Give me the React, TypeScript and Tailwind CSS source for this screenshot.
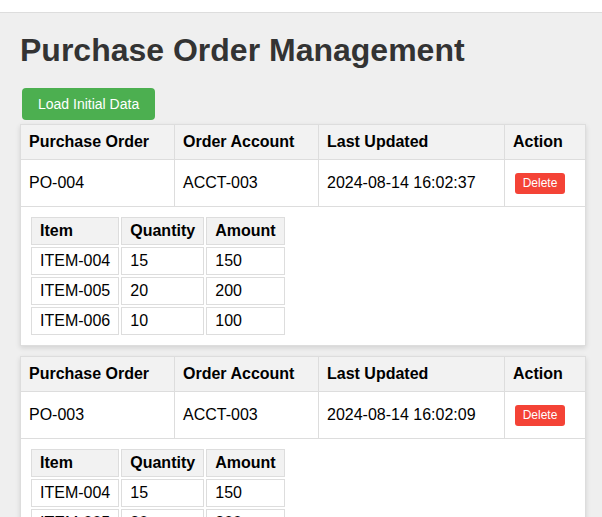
import React from 'react';

type Item = { item: string; qty: number; amount: number };
type Order = { po: string; account: string; updated: string; items: Item[] };

const orders: Order[] = [
  {
    po: 'PO-004',
    account: 'ACCT-003',
    updated: '2024-08-14 16:02:37',
    items: [
      { item: 'ITEM-004', qty: 15, amount: 150 },
      { item: 'ITEM-005', qty: 20, amount: 200 },
      { item: 'ITEM-006', qty: 10, amount: 100 },
    ],
  },
  {
    po: 'PO-003',
    account: 'ACCT-003',
    updated: '2024-08-14 16:02:09',
    items: [
      { item: 'ITEM-004', qty: 15, amount: 150 },
      { item: 'ITEM-005', qty: 20, amount: 200 },
      { item: 'ITEM-006', qty: 10, amount: 100 },
    ],
  },
];

function OrderCard({ order }: { order: Order }) {
  return (
    <table className="w-[566px] border-collapse bg-white shadow-[0_2px_5px_rgba(0,0,0,0.12)] mb-[10px] text-[16px] text-black">
      <thead>
        <tr className="bg-[#f2f2f2] h-[35px]">
          <th className="w-[154px] border border-[#dddddd] px-2 text-left font-bold">Purchase Order</th>
          <th className="w-[144px] border border-[#dddddd] px-2 text-left font-bold">Order Account</th>
          <th className="w-[186px] border border-[#dddddd] px-2 text-left font-bold">Last Updated</th>
          <th className="border border-[#dddddd] px-2 text-left font-bold">Action</th>
        </tr>
      </thead>
      <tbody>
        <tr className="h-[47px]">
          <td className="border border-[#dddddd] px-2">{order.po}</td>
          <td className="border border-[#dddddd] px-2">{order.account}</td>
          <td className="border border-[#dddddd] px-2">{order.updated}</td>
          <td className="border border-[#dddddd] pl-[10px]">
            <button className="block h-[21px] w-[50px] rounded-[3px] bg-[#f44336] text-[12px] text-white leading-none">
              Delete
            </button>
          </td>
        </tr>
        <tr>
          <td colSpan={4} className="border border-[#dddddd] p-[10px]">
            <table className="border-separate border-spacing-[2px] -m-[2px] whitespace-nowrap">
              <thead>
                <tr className="bg-[#f2f2f2] h-[28px]">
                  <th className="w-[88px] border border-[#dddddd] px-[8px] text-left font-bold">Item</th>
                  <th className="w-[83px] border border-[#dddddd] px-[8px] text-left font-bold">Quantity</th>
                  <th className="w-[79px] border border-[#dddddd] px-[8px] text-left font-bold">Amount</th>
                </tr>
              </thead>
              <tbody>
                {order.items.map((it) => (
                  <tr key={it.item} className="h-[28px]">
                    <td className="border border-[#dddddd] px-[8px]">{it.item}</td>
                    <td className="border border-[#dddddd] px-[8px]">{it.qty}</td>
                    <td className="border border-[#dddddd] px-[8px]">{it.amount}</td>
                  </tr>
                ))}
              </tbody>
            </table>
          </td>
        </tr>
      </tbody>
    </table>
  );
}

export default function App() {
  return (
    <div className="min-h-[517px] bg-[#efefef] font-['Liberation_Sans',Arial,sans-serif]">
      <div className="h-[13px] bg-white border-b border-[#dddddd]" />
      <div className="pl-5 pr-4 pt-[19px]">
        <h1 className="text-[32px] font-bold text-[#333333] leading-[37px] mb-[19px]">Purchase Order Management</h1>
        <button className="ml-[2px] mb-[4px] h-[32px] px-4 rounded-[4px] bg-[#4caf50] text-white text-[14px]">
          Load Initial Data
        </button>
        {orders.map((o) => (
          <OrderCard key={o.po} order={o} />
        ))}
      </div>
    </div>
  );
}
